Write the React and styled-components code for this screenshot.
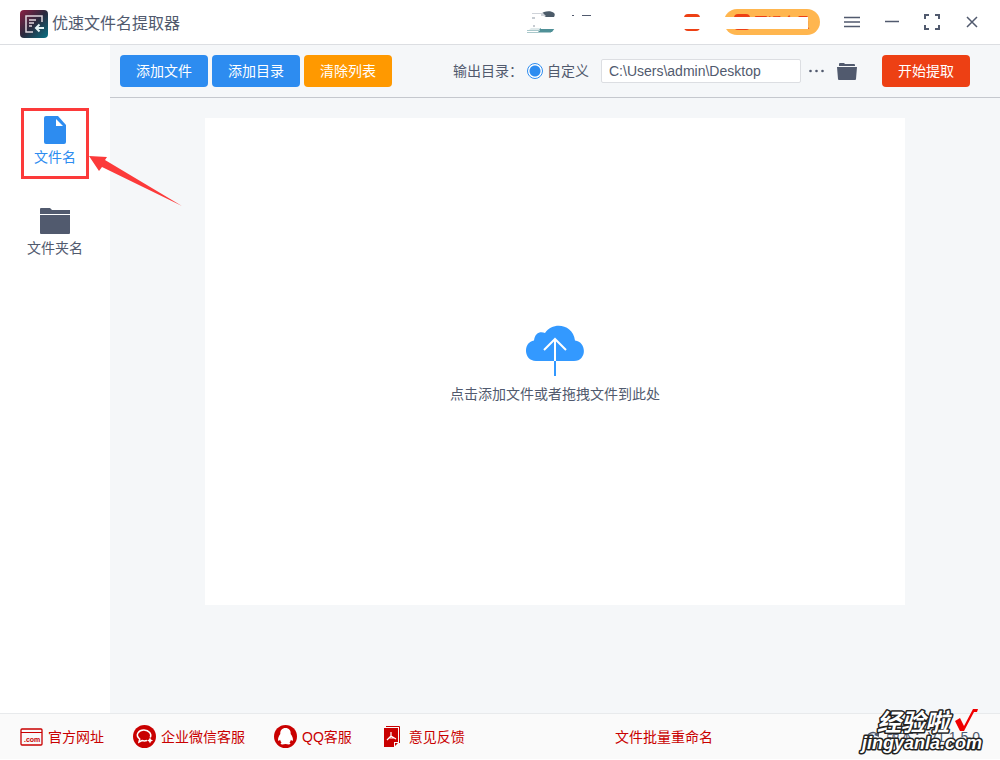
import React, { useState } from "react";
import styled, { createGlobalStyle, css } from "styled-components";

const GlobalStyle = createGlobalStyle`
  * {
    box-sizing: border-box;
  }

  body {
    margin: 0;
    color: #515a6e;
    background: #fff;
    font-family: "Liberation Sans", "Noto Sans CJK SC", sans-serif;
    font-size: 14px;
    line-height: 20px;
  }

  button,
  input {
    font: inherit;
    color: inherit;
  }

  button {
    padding: 0;
    border: 0;
    background: none;
    cursor: pointer;
  }

  svg {
    display: block;
    flex: none;
  }
`;

const Page = styled.div`
  display: flex;
  flex-direction: column;
  min-height: 100vh;
  padding-bottom: 1px;
`;

const Header = styled.header`
  display: flex;
  align-items: center;
  justify-content: space-between;
  height: 45px;
  padding: 0 18px 0 20px;
  border-bottom: 1px solid #dcdee2;
`;

const Brand = styled.h1`
  display: flex;
  align-items: center;
  gap: 4px;
  margin: 3px 0 0;
  font-size: 16px;
  font-weight: 400;
`;

const HeaderRight = styled.div`
  display: flex;
  align-items: center;
`;

const Account = styled.div`
  position: relative;
  display: flex;
  align-items: center;
  justify-content: space-between;
  width: 293px;
  height: 26px;
`;

const AccountCover = styled.div`
  position: absolute;
  top: 8px;
  left: 14px;
  right: 12px;
  height: 12px;
  background: #fff;
`;

const User = styled.div`
  display: flex;
  gap: 13px;
`;

const Membership = styled.div`
  display: flex;
  align-items: center;
  gap: 24px;
`;

const VipButton = styled.button`
  display: flex;
  align-items: center;
  gap: 4px;
  height: 26px;
  padding: 0 10px;
  border-radius: 13px;
  background: #ffb64f;
  color: #ed4014;
`;

const VipDot = styled.span`
  width: 16px;
  height: 16px;
  border-radius: 4px;
  background: #ed4014;
`;

const WindowButtons = styled.div`
  display: flex;
  gap: 20px;
  margin-left: 22px;
`;

const IconButton = styled.button`
  display: flex;
  align-items: center;
  justify-content: center;
  width: 20px;
  height: 20px;
`;

const Body = styled.div`
  display: flex;
  flex: 1;
`;

const Sidebar = styled.nav`
  display: flex;
  flex-direction: column;
  align-items: center;
  gap: 20px;
  width: 110px;
  padding-top: 63px;
`;

const SideItem = styled.button`
  position: relative;
  display: flex;
  flex-direction: column;
  align-items: center;
  gap: 3px;
  width: 68px;
  height: 71px;
  padding-top: 5px;
  border: 3px solid transparent;
  color: #515a6e;
  white-space: nowrap;

  ${({ $active }) => $active && css`
    border-color: #fc3a3a;
    color: #2d8cf0;
  `}
`;

const Pointer = styled.svg`
  position: absolute;
  top: 42px;
  left: 65px;
`;

const Content = styled.main`
  display: flex;
  flex: 1;
  flex-direction: column;
  background: #f5f7f9;
`;

const Toolbar = styled.div`
  display: flex;
  align-items: center;
  justify-content: space-between;
  height: 53px;
  padding: 0 30px 0 10px;
  border-bottom: 1px solid #c5c8ce;
`;

const ButtonRow = styled.div`
  display: flex;
  gap: 4px;
`;

const colors = {
  primary: "#2d8cf0",
  warning: "#ff9900",
  danger: "#ed4014",
};

const Button = styled.button`
  width: 88px;
  height: 32px;
  border-radius: 4px;
  background: ${({ $type }) => colors[$type]};
  color: #fff;
`;

const Output = styled.div`
  display: flex;
  align-items: center;
`;

const RadioLabel = styled.label`
  display: flex;
  align-items: center;
  gap: 4px;
  margin: 0 12px 0 4px;
`;

const Radio = styled.input`
  width: 16px;
  height: 16px;
  margin: 0;
  border: 1px solid #2d8cf0;
  border-radius: 50%;
  background: radial-gradient(circle, #2d8cf0 5px, #fff 6px);
  appearance: none;
`;

const PathInput = styled.input`
  width: 200px;
  height: 24px;
  padding: 0 7px;
  border: 1px solid #dcdee2;
  border-radius: 2px;
  background: #fff;
`;

const OutputIcons = styled.div`
  display: flex;
  gap: 11px;
  margin: 0 25px 0 5px;
`;

const Workspace = styled.div`
  display: flex;
  flex: 1;
  align-items: flex-start;
  padding: 20px 95px 108px;
`;

const DropZone = styled.button`
  display: flex;
  flex: 1;
  flex-direction: column;
  align-items: center;
  align-self: stretch;
  justify-content: center;
  gap: 8px;
  padding-top: 6px;
  background: #fff;
`;

const Footer = styled.footer`
  position: relative;
  display: flex;
  align-items: center;
  justify-content: space-between;
  height: 46px;
  padding: 0 20px;
  border-top: 1px solid #e8eaec;
  background: #fafafa;
`;

const Links = styled.div`
  display: flex;
  gap: 29px;
`;

const FooterLink = styled.a`
  display: flex;
  align-items: center;
  gap: 5px;
  color: #c90000;
  text-decoration: none;
`;

const Version = styled.span`
  display: flex;
  align-items: center;
  gap: 6px;
`;

const FooterEnd = styled.div`
  display: flex;
  align-items: center;
  justify-content: space-between;
  width: 365px;
`;

const Watermark = styled.svg`
  position: absolute;
  right: 10px;
  bottom: 0;
  pointer-events: none;
`;

function Logo() {
  return (
    <svg width="28" height="28" viewBox="0 0 28 28" fill="none">
      <defs>
        <linearGradient id="logo" x1="0" y1="0" x2="28" y2="28" gradientUnits="userSpaceOnUse">
          <stop stopColor="#8a1f43" />
          <stop offset="0.5" stopColor="#2b2a3e" />
          <stop offset="1" stopColor="#087184" />
        </linearGradient>
      </defs>
      <rect width="28" height="28" rx="4" fill="url(#logo)" />
      <path d="M22 12V6H6v16h7" stroke="#e0d6dd" strokeWidth="1.500" />
      <path d="M9 10h7M9 13h5M9 16h3" stroke="#e0d6dd" strokeWidth="1.3" />
      <path d="M24 18h-8m3.500-3.500L16 18l3.500 3.500" stroke="#e5f3f5" strokeWidth="2" />
    </svg>
  );
}

function Avatar() {
  return (
    <svg width="28" height="24" viewBox="0 0 28 24">
      <path d="M14 4c2-3 10-4 13-1 1 1 1 2 0 4h-8z" fill="#4c5b69" />
      <path d="M5 3h11l3 3H14V4H5z" fill="#cfd3d9" />
      <path d="M5 7h3v2H5zM6 15h2v2H6z" fill="#c6cbd1" />
      <path d="M8 18h20l-3 4H12z" fill="#4f9097" />
      <path d="M0 20h13v1H0zM0 22h24v1H0z" fill="#a9c8cb" />
      <path d="M4 18h10l-2 2H2z" fill="#dfe9ea" />
    </svg>
  );
}

function FileIcon() {
  return (
    <svg width="22" height="28" viewBox="0 0 22 28">
      <path d="M2 0h12l8 9v17a2 2 0 0 1-2 2H2a2 2 0 0 1-2-2V2a2 2 0 0 1 2-2z" fill="#2d8cf0" />
      <path d="M12 3v7h7z" fill="#fff" />
    </svg>
  );
}

function FolderIcon() {
  return (
    <svg width="30" height="28" viewBox="0 0 30 28" fill="#515a6e">
      <path d="M1 1h9l2 2h18v4H0V2a1 1 0 0 1 1-1zM0 8h30v18a1 1 0 0 1-1 1H1a1 1 0 0 1-1-1z" />
    </svg>
  );
}

function CloudIcon() {
  return (
    <svg width="58" height="51" viewBox="0 0 58 51" fill="none">
      <path
        d="M10 36C-3 36-3 17 8 15.500 9 8 14 6 19 8 27-4 47-1 49 15.500 61 17 61 36 48 36z"
        fill="#3399ff"
      />
      <path d="M29 36v15" stroke="#3399ff" strokeWidth="2" />
      <path d="M29 36V14M18 25l11-11 11 11" stroke="#fff" strokeWidth="2" />
    </svg>
  );
}

function SiteIcon() {
  return (
    <svg width="23" height="18" viewBox="0 0 23 18" fill="none" stroke="#c90000">
      <rect x="1" y="1" width="21" height="16" rx="1" strokeWidth="1.300" />
      <path d="M1 4.500h21" />
      <text x="4" y="14" fill="#c90000" stroke="none" fontSize="7" fontWeight="700">.com</text>
    </svg>
  );
}

function WechatIcon() {
  return (
    <svg width="23" height="23" viewBox="0 0 23 23" fill="none">
      <circle cx="11.500" cy="11.500" r="11.500" fill="#c90000" />
      <path d="M14 15.500c-2 .6-3.500.5-5 0L6 17l.7-3C1.500 10 6 4.800 11 5c5 .2 8 4 6.300 7.500" stroke="#fff" strokeWidth="1.500" />
      <path d="M17 12.500l1 2 2 1-2 1-1 2-1-2-2-1 2-1z" fill="#fff" />
    </svg>
  );
}

function QQIcon() {
  return (
    <svg width="23" height="23" viewBox="0 0 23 23">
      <circle cx="11.500" cy="11.500" r="11.500" fill="#c90000" />
      <path
        d="M11.500 3C8 3 6 5.500 6.300 9 4.500 11.500 3.500 14 4.300 15.800c.5.400 1.400-.8 1.800-1.100.2 1.100.6 1.900 1.400 2.700-2.200 1.700-.1 2.600 4 1.600 4.100 1 6.200.1 4-1.600.8-.8 1.200-1.600 1.400-2.700.4.300 1.300 1.500 1.800 1.100.8-1.800-.2-4.300-2-6.800C17 5.500 15 3 11.500 3z"
        fill="#fff"
      />
    </svg>
  );
}

function FeedbackIcon() {
  return (
    <svg width="23" height="21" viewBox="-3 0 23 21" fill="none">
      <path d="M0 2h14v14h-4v5H0zM11 17h3l-3 3z" fill="#c90000" />
      <path d="M2 .5h13.500V17" stroke="#c90000" />
      <path d="M7 6v4l-4 4M7 10l5 3M5 12h5" stroke="#fff" strokeWidth="1.200" />
    </svg>
  );
}

function App() {
  const [tab, setTab] = useState("file");
  const [path, setPath] = useState("C:\\Users\\admin\\Desktop");

  return (
    <Page>
      <GlobalStyle />
      <Header>
        <Brand>
          <Logo />
          优速文件名提取器
        </Brand>
        <HeaderRight>
          <Account>
            <User>
              <Avatar />
              <svg width="24" height="24" viewBox="0 0 24 24" fill="#515a6e">
                <path d="M4 5h2v1H4zM14 5h9v1h-9z" />
              </svg>
            </User>
            <Membership>
              <svg width="16" height="17" viewBox="0 0 16 17">
                <rect width="16" height="17" rx="4" fill="#ed4014" />
              </svg>
              <VipButton type="button">
                <VipDot />
                开通会员
              </VipButton>
            </Membership>
            <AccountCover />
          </Account>
          <WindowButtons>
            <IconButton type="button" aria-label="菜单">
              <svg width="16" height="12" viewBox="0 0 16 12" stroke="#515a6e" strokeWidth="1.500">
                <path d="M0 1.500h16M0 6h16M0 10.500h16" />
              </svg>
            </IconButton>
            <IconButton type="button" aria-label="最小化">
              <svg width="14" height="12" viewBox="0 0 14 12" stroke="#515a6e">
                <path d="M0 5.500h14" strokeWidth="1.500" />
              </svg>
            </IconButton>
            <IconButton type="button" aria-label="最大化">
              <svg width="16" height="16" viewBox="0 0 16 16" fill="none" stroke="#515a6e" strokeWidth="2">
                <path d="M1 5V1h4M11 1h4v4M15 11v4h-4M5 15H1v-4" />
              </svg>
            </IconButton>
            <IconButton type="button" aria-label="关闭">
              <svg width="12" height="12" viewBox="0 0 12 12" stroke="#515a6e" strokeWidth="1.500">
                <path d="M1 1l10 10M11 1L1 11" />
              </svg>
            </IconButton>
          </WindowButtons>
        </HeaderRight>
      </Header>

      <Body>
        <Sidebar>
          <SideItem type="button" $active={tab === "file"} onClick={() => setTab("file")}>
            <FileIcon />
            文件名
            <Pointer width="96" height="56" viewBox="0 0 96 56">
              <path d="M0 3l18 1-2 3 77 46L13 14l-3 4z" fill="#fc3a3a" />
            </Pointer>
          </SideItem>
          <SideItem type="button" $active={tab === "folder"} onClick={() => setTab("folder")}>
            <FolderIcon />
            文件夹名
          </SideItem>
        </Sidebar>

        <Content>
          <Toolbar>
            <ButtonRow>
              <Button type="button" $type="primary">添加文件</Button>
              <Button type="button" $type="primary">添加目录</Button>
              <Button type="button" $type="warning">清除列表</Button>
            </ButtonRow>
            <Output>
              <span>输出目录：</span>
              <RadioLabel>
                <Radio type="radio" name="output" defaultChecked />
                自定义
              </RadioLabel>
              <PathInput
                aria-label="输出目录"
                value={path}
                onChange={(e) => setPath(e.target.value)}
              />
              <OutputIcons>
                <IconButton type="button" aria-label="更多">
                  <svg width="15" height="4" viewBox="0 0 15 4" fill="#515a6e">
                    <circle cx="1.500" cy="2" r="1.300" />
                    <circle cx="7.500" cy="2" r="1.300" />
                    <circle cx="13.500" cy="2" r="1.300" />
                  </svg>
                </IconButton>
                <IconButton type="button" aria-label="打开目录">
                  <svg width="20" height="17" viewBox="0 0 20 17" fill="#515a6e">
                    <path d="M2 3V1a1 1 0 0 1 1-1h4l1 1h9a1 1 0 0 1 1 1v1zM0 4h20l-1 12a1 1 0 0 1-1 1H2a1 1 0 0 1-1-1z" />
                  </svg>
                </IconButton>
              </OutputIcons>
              <Button type="button" $type="danger">开始提取</Button>
            </Output>
          </Toolbar>
          <Workspace>
            <DropZone type="button">
              <CloudIcon />
              点击添加文件或者拖拽文件到此处
            </DropZone>
          </Workspace>
        </Content>
      </Body>

      <Footer>
        <Links>
          <FooterLink href="#site"><SiteIcon />官方网址</FooterLink>
          <FooterLink href="#wechat"><WechatIcon />企业微信客服</FooterLink>
          <FooterLink href="#qq"><QQIcon />QQ客服</FooterLink>
          <FooterLink href="#feedback"><FeedbackIcon />意见反馈</FooterLink>
        </Links>
        <FooterEnd>
          <FooterLink href="#rename">文件批量重命名</FooterLink>
          <Version>
            <svg width="14" height="14" viewBox="0 0 14 14" fill="none" stroke="#515a6e">
              <path d="M1 9c0-6 6-8 10-5" strokeWidth="1.500" />
              <path d="M13 1v6L8 5z" fill="#515a6e" stroke="none" />
            </svg>
            版本：V1.1.5.0
          </Version>
        </FooterEnd>
        <Watermark width="132" height="54" viewBox="0 0 132 54">
          <g
            fill="#fff"
            stroke="#222"
            strokeWidth="3"
            strokeLinejoin="round"
            paintOrder="stroke"
            fontWeight="700"
            fontStyle="italic"
          >
            <text x="19" y="26" fontSize="24">经验啦</text>
            <text x="4" y="44" fontSize="18">jingyanla.com</text>
          </g>
          <path d="M97 16l5-3 4 8 9-17h5l-1 3h-3l-10 19h-4z" fill="#f00000" />
        </Watermark>
      </Footer>
    </Page>
  );
}

export default App;
